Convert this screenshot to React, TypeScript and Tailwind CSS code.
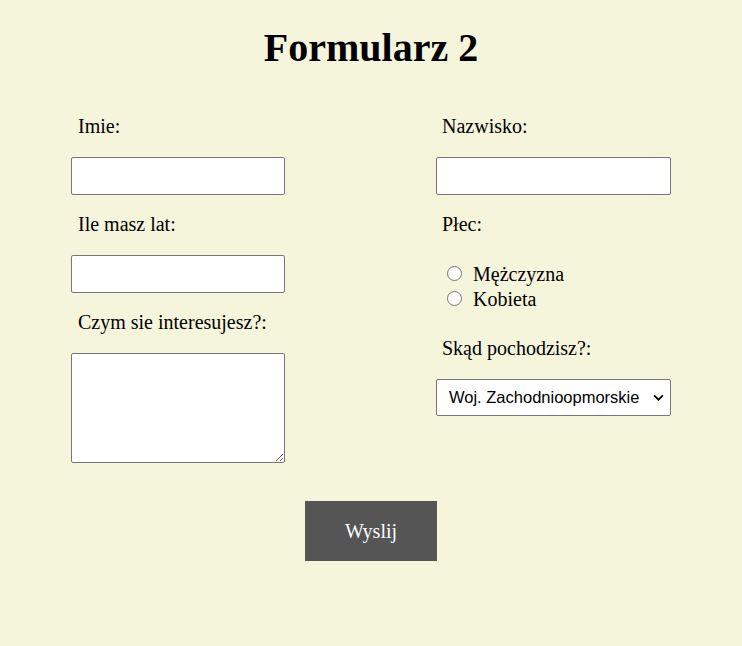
function Radio({ label }: { label: string }) {
  return (
    <label className="flex h-[25px] items-center gap-[11px] text-[20px]">
      <input
        type="radio"
        name="plec"
        className="h-[15px] w-[15px] appearance-none rounded-full border border-[#767676] bg-white"
      />
      {label}
    </label>
  );
}

export default function App() {
  return (
    <div className="min-h-[646px] bg-[#f5f5dc] pt-[25px] text-black [font-family:'Liberation_Serif',serif]">
      <h1 className="text-center text-[40px] font-bold leading-[46px]">
        Formularz 2
      </h1>

      <form className="mx-auto mt-[44px] flex w-[600px] justify-between">
        {/* Left column */}
        <div className="flex w-[214px] flex-col">
          <label className="h-[23px] pl-[7px] text-[20px] leading-[23px]">Imie:</label>
          <input
            type="text"
            className="mt-[19px] h-[38px] w-full rounded-[2px] border border-[#767676] bg-white"
          />
          <label className="mt-[18px] h-[23px] pl-[7px] text-[20px] leading-[23px]">
            Ile masz lat:
          </label>
          <input
            type="text"
            className="mt-[19px] h-[38px] w-full rounded-[2px] border border-[#767676] bg-white"
          />
          <label className="mt-[18px] h-[23px] pl-[7px] text-[20px] leading-[23px]">
            Czym sie interesujesz?:
          </label>
          <textarea className="mt-[19px] h-[110px] w-full rounded-[2px] border border-[#767676] bg-white" />
        </div>

        {/* Right column */}
        <div className="flex w-[235px] flex-col">
          <label className="h-[23px] pl-[6px] text-[20px] leading-[23px]">Nazwisko:</label>
          <input
            type="text"
            className="mt-[19px] h-[38px] w-full rounded-[2px] border border-[#767676] bg-white"
          />
          <label className="mt-[18px] h-[23px] pl-[6px] text-[20px] leading-[23px]">Płec:</label>
          <div className="mt-[25px] flex flex-col pl-[11px]">
            <Radio label="Mężczyzna" />
            <Radio label="Kobieta" />
          </div>
          <label className="mt-[26px] h-[23px] pl-[6px] text-[20px] leading-[23px]">
            Skąd pochodzisz?:
          </label>
          <div className="relative mt-[19px]">
            <select className="h-[37px] w-full appearance-none rounded-[2px] border border-[#767676] bg-white pl-[12px] text-[16.5px] [font-family:'Liberation_Sans',Arial,sans-serif]">
              <option>Woj. Zachodnioopmorskie</option>
            </select>
            <svg
              viewBox="0 0 12 8"
              className="pointer-events-none absolute top-[15px] right-[7px] h-[7px] w-[11px]"
              fill="none"
              stroke="black"
              strokeWidth="2"
            >
              <path d="M1 1.5l5 5 5-5" />
            </svg>
          </div>
        </div>
      </form>

      <div className="mt-[38px] flex justify-center">
        <button
          type="button"
          className="h-[60px] w-[132px] bg-[#555555] text-[20px] text-white"
        >
          Wyslij
        </button>
      </div>
    </div>
  );
}
